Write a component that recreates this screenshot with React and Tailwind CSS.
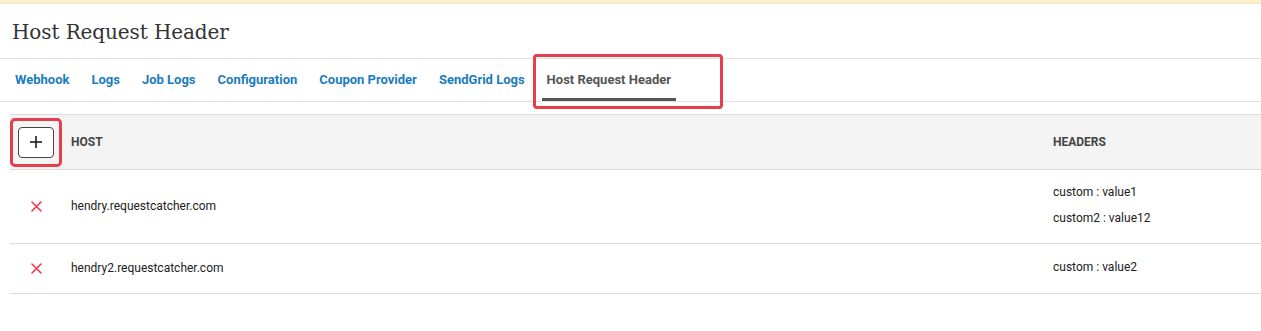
import { useState } from 'react'

const tabs = ['Webhook', 'Logs', 'Job Logs', 'Configuration', 'Coupon Provider', 'SendGrid Logs', 'Host Request Header']

const rows = [
  { id: 1, host: 'hendry.requestcatcher.com', headers: ['custom : value1', 'custom2 : value12'] },
  { id: 2, host: 'hendry2.requestcatcher.com', headers: ['custom : value2'] },
]

function XIcon() {
  return (
    <svg width="11" height="11" viewBox="0 0 11 11" className="block">
      <path d="M1 1 L10 10 M10 1 L1 10" stroke="#f0384b" strokeWidth="1.6" strokeLinecap="round" />
    </svg>
  )
}

export default function App() {
  const [active, setActive] = useState('Host Request Header')

  return (
    <div className="w-[1261px] h-[331px] overflow-hidden bg-white font-['Roboto',sans-serif]">
      {/* top notice strip */}
      <div className="h-[4px] bg-[#fdefc6] border-b border-[#e9e6dc]"></div>

      <div className="h-[55px] border-b border-[#e2e2e2] pl-[12px] flex items-center">
        <h1 className="text-[20px] text-[#333] font-['DejaVu_Serif',serif] tracking-[-0.1px] pt-[2px]">Host Request Header</h1>
      </div>

      {/* Tabs */}
      <div className="relative flex gap-[12px] pl-[10px] h-[43px] border-b border-[#e2e2e2]">
        {tabs.map(tab => (
          <button
            key={tab}
            onClick={() => setActive(tab)}
            className={`h-full px-[5px] text-[13px] font-bold border-b-[3px] pt-[3px] ${
              active === tab ? 'text-[#555] border-[#555]' : 'text-[#1a7cbd] border-transparent'
            }`}
          >
            {tab}
          </button>
        ))}
        {active === 'Host Request Header' && (
          <div className="absolute left-[533px] top-[-5px] w-[190px] h-[55px] border-[3px] border-[#e63e4c] rounded-[4px] pointer-events-none"></div>
        )}
      </div>

      {/* Table */}
      <div className="ml-[10px] mt-[12px]">
        <div className="flex h-[56px] bg-[#f4f4f4] border-t border-b border-[#dcdcdc] text-[12px] font-bold text-[#444] uppercase">
          <div className="relative w-[52px] flex items-center justify-center">
            <button className="w-[36px] h-[31px] bg-white border border-[#444] rounded-[4px] flex items-center justify-center">
              <svg width="14" height="14" viewBox="0 0 14 14">
                <path d="M7 1 V13 M1 7 H13" stroke="#111" strokeWidth="1.5" />
              </svg>
            </button>
            <div className="absolute left-0 top-[3px] w-[52px] h-[49px] border-[3px] border-[#e63e4c] rounded-[5px]"></div>
          </div>
          <div className="w-[982px] flex items-center pl-[9px]">Host</div>
          <div className="flex-1 flex items-center pl-[9px]">Headers</div>
        </div>

        {rows.map(row => (
          <div
            key={row.id}
            className={`flex border-b border-[#dcdcdc] text-[12px] text-[#222] ${row.headers.length > 1 ? 'h-[74px]' : 'h-[50px]'}`}
          >
            <div className="w-[52px] flex items-center justify-center">
              <XIcon />
            </div>
            <div className="w-[982px] flex items-center pl-[9px] pb-[1px]">{row.host}</div>
            <div className="flex-1 flex flex-col justify-center gap-[8px] pl-[9px] pb-[3px]">
              {row.headers.map(h => (
                <p key={h} className="leading-[18px]">{h}</p>
              ))}
            </div>
          </div>
        ))}
      </div>
    </div>
  )
}
